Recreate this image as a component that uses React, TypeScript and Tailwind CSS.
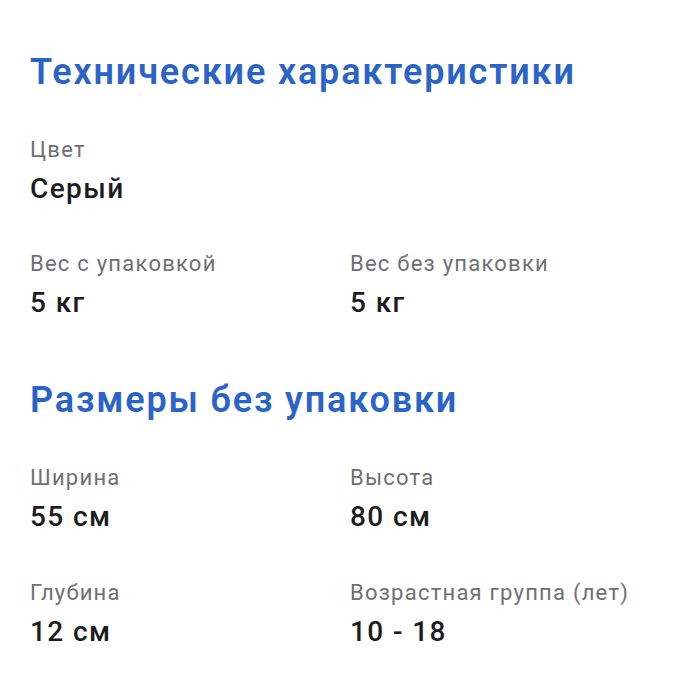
import React from 'react';

interface Spec {
  label: string;
  value: string;
}

const weight: Spec[] = [
  { label: 'Вес с упаковкой', value: '5 кг' },
  { label: 'Вес без упаковки', value: '5 кг' },
];

const sizes: Spec[] = [
  { label: 'Ширина', value: '55 см' },
  { label: 'Высота', value: '80 см' },
  { label: 'Глубина', value: '12 см' },
  { label: 'Возрастная группа (лет)', value: '10 - 18' },
];

const SpecItem = ({ spec }: { spec: Spec }) => (
  <div className="flex flex-col">
    <span className="text-[22px] leading-[28px] tracking-[0.056em] text-[#6f6f74]">{spec.label}</span>
    <span className="mt-[8px] text-[28px] leading-[34px] font-medium tracking-[0.05em] text-[#1c1c1e]">{spec.value}</span>
  </div>
);

export default function App() {
  return (
    <div className="w-[698px] h-[700px] bg-white px-[30px] pt-[51px]" style={{ fontFamily: 'Roboto, "Noto Sans", sans-serif' }}>
      <h2 className="text-[36px] leading-[42px] font-semibold tracking-[0.051em] text-[#2b64c8]">
        Технические характеристики
      </h2>

      <div className="mt-[43px]">
        <SpecItem spec={{ label: 'Цвет', value: 'Серый' }} />
      </div>

      <div className="mt-[44px] grid grid-cols-[320px_1fr]">
        {weight.map(s => <SpecItem key={s.label} spec={s} />)}
      </div>

      <h2 className="mt-[59px] text-[36px] leading-[42px] font-semibold tracking-[0.051em] text-[#2b64c8]">
        Размеры без упаковки
      </h2>

      <div className="mt-[43px] grid grid-cols-[320px_1fr] gap-y-[45px]">
        {sizes.map(s => <SpecItem key={s.label} spec={s} />)}
      </div>
    </div>
  );
}
